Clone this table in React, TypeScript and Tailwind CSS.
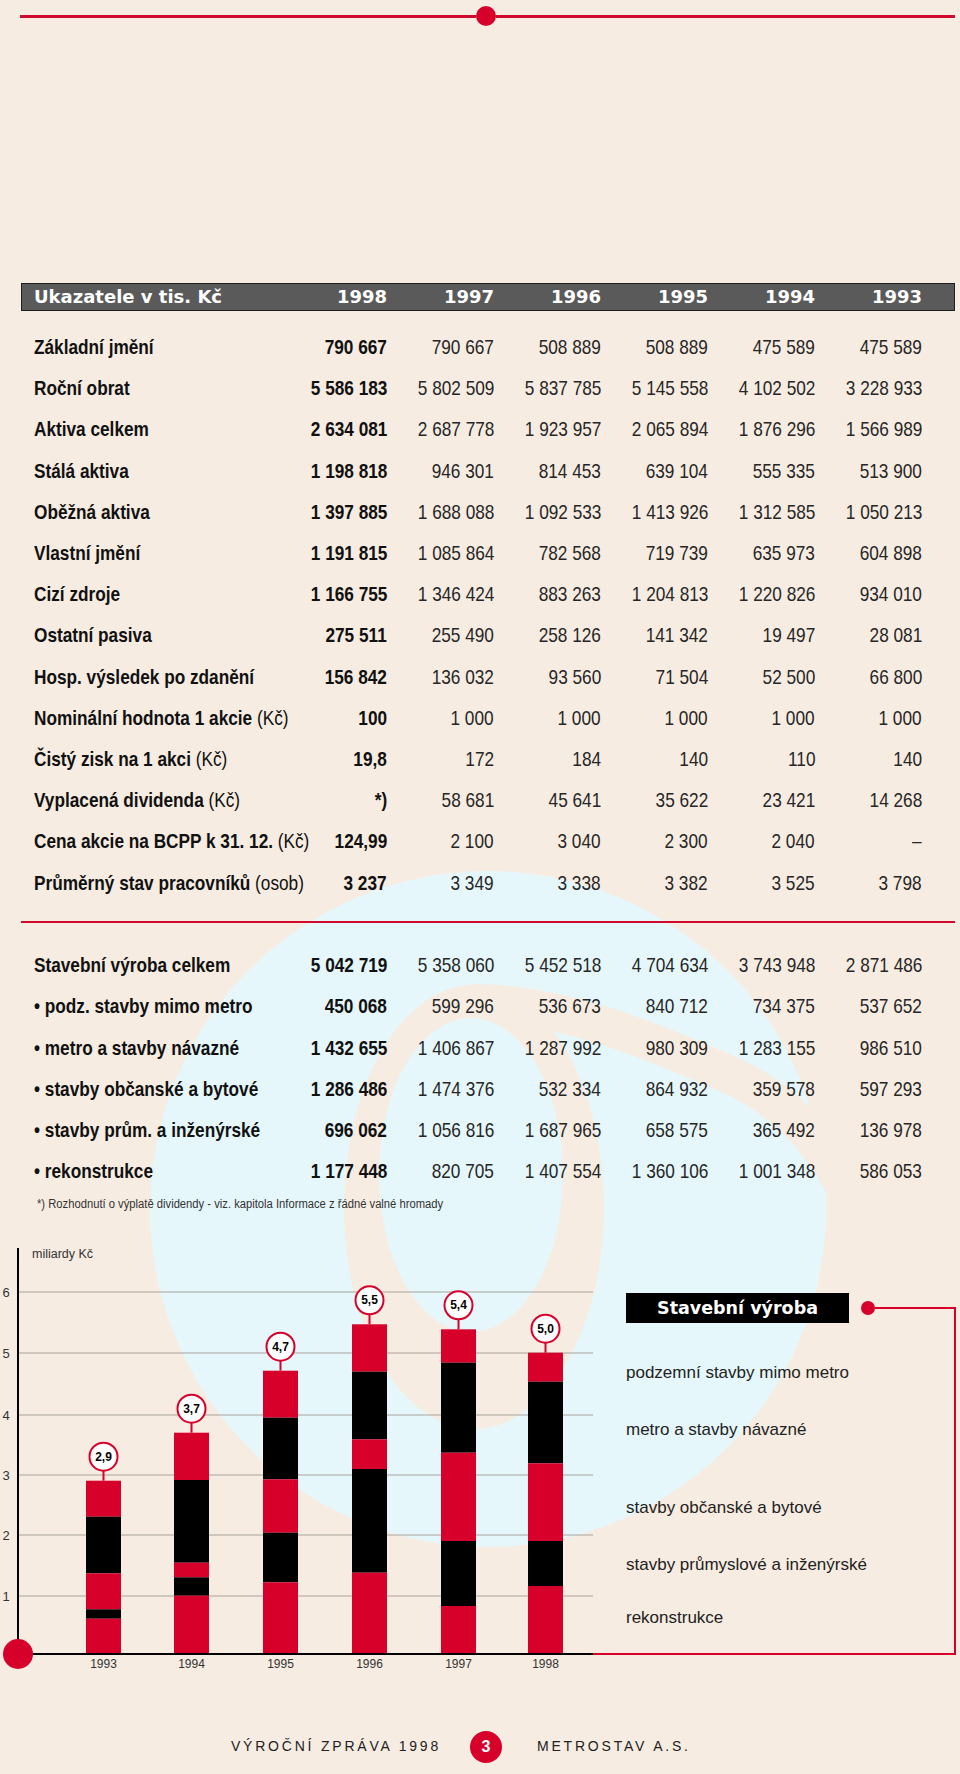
import clsx from 'clsx';

type Row = { label: string; unit?: string; values: string[] };

const YEARS = ['1998', '1997', '1996', '1995', '1994', '1993'];

const MAIN_ROWS: Row[] = [
  { label: 'Základní jmění', values: ['790 667', '790 667', '508 889', '508 889', '475 589', '475 589'] },
  { label: 'Roční obrat', values: ['5 586 183', '5 802 509', '5 837 785', '5 145 558', '4 102 502', '3 228 933'] },
  { label: 'Aktiva celkem', values: ['2 634 081', '2 687 778', '1 923 957', '2 065 894', '1 876 296', '1 566 989'] },
  { label: 'Stálá aktiva', values: ['1 198 818', '946 301', '814 453', '639 104', '555 335', '513 900'] },
  { label: 'Oběžná aktiva', values: ['1 397 885', '1 688 088', '1 092 533', '1 413 926', '1 312 585', '1 050 213'] },
  { label: 'Vlastní jmění', values: ['1 191 815', '1 085 864', '782 568', '719 739', '635 973', '604 898'] },
  { label: 'Cizí zdroje', values: ['1 166 755', '1 346 424', '883 263', '1 204 813', '1 220 826', '934 010'] },
  { label: 'Ostatní pasiva', values: ['275 511', '255 490', '258 126', '141 342', '19 497', '28 081'] },
  { label: 'Hosp. výsledek po zdanění', values: ['156 842', '136 032', '93 560', '71 504', '52 500', '66 800'] },
  { label: 'Nominální hodnota 1 akcie', unit: '(Kč)', values: ['100', '1 000', '1 000', '1 000', '1 000', '1 000'] },
  { label: 'Čistý zisk na 1 akci', unit: '(Kč)', values: ['19,8', '172', '184', '140', '110', '140'] },
  { label: 'Vyplacená dividenda', unit: '(Kč)', values: ['*)', '58 681', '45 641', '35 622', '23 421', '14 268'] },
  { label: 'Cena akcie na BCPP k 31. 12.', unit: '(Kč)', values: ['124,99', '2 100', '3 040', '2 300', '2 040', '–'] },
  { label: 'Průměrný stav pracovníků', unit: '(osob)', values: ['3 237', '3 349', '3 338', '3 382', '3 525', '3 798'] },
];

const BUILD_ROWS: Row[] = [
  { label: 'Stavební výroba celkem', values: ['5 042 719', '5 358 060', '5 452 518', '4 704 634', '3 743 948', '2 871 486'] },
  { label: '• podz. stavby mimo metro', values: ['450 068', '599 296', '536 673', '840 712', '734 375', '537 652'] },
  { label: '• metro a stavby návazné', values: ['1 432 655', '1 406 867', '1 287 992', '980 309', '1 283 155', '986 510'] },
  { label: '• stavby občanské a bytové', values: ['1 286 486', '1 474 376', '532 334', '864 932', '359 578', '597 293'] },
  { label: '• stavby prům. a inženýrské', values: ['696 062', '1 056 816', '1 687 965', '658 575', '365 492', '136 978'] },
  { label: '• rekonstrukce', values: ['1 177 448', '820 705', '1 407 554', '1 360 106', '1 001 348', '586 053'] },
];

// segment boundaries (chart px, top -> down), read off the printed chart
const BARS = [
  { year: '1993', value: '2,9', x: 86, stops: [240.7, 276.7, 333.3, 369.3, 378.7] },
  { year: '1994', value: '3,7', x: 174, stops: [192.7, 240, 322.7, 337.3, 355.7] },
  { year: '1995', value: '4,7', x: 263, stops: [130.7, 177.7, 239.3, 292.7, 342.3] },
  { year: '1996', value: '5,5', x: 352, stops: [84.3, 131.7, 199.3, 229, 332.7] },
  { year: '1997', value: '5,4', x: 441, stops: [89.3, 122.7, 212.7, 301, 366] },
  { year: '1998', value: '5,0', x: 528, stops: [112.7, 141.7, 223.3, 301, 346] },
];

const BASE = 414;
const GRID = [
  { v: 1, y: 356 },
  { v: 2, y: 295 },
  { v: 3, y: 235 },
  { v: 4, y: 175 },
  { v: 5, y: 113 },
  { v: 6, y: 52 },
];

const LEGEND = [
  { text: 'podzemní stavby mimo metro', mt: 'mt-[55px]' },
  { text: 'metro a stavby návazné', mt: 'mt-[37px]' },
  { text: 'stavby občanské a bytové', mt: 'mt-[58px]' },
  { text: 'stavby průmyslové a inženýrské', mt: 'mt-[37px]' },
  { text: 'rekonstrukce', mt: 'mt-[33px]' },
];

// no condensed face is installed, so the table type is narrowed horizontally
function NumRow({ row }: { row: Row }) {
  return (
    <div className="grid h-[41.2px] grid-cols-[minmax(0,1fr)_repeat(6,107px)] items-center leading-none">
      <div className="whitespace-nowrap font-bold text-[#111]">
        <span className="inline-block origin-left scale-x-[0.82]">
          {row.label}
          {row.unit && <span className="font-normal"> {row.unit}</span>}
        </span>
      </div>
      {row.values.map((v, i) => (
        <div
          key={i}
          className={clsx('whitespace-nowrap text-right', i === 0 ? 'font-bold text-[#111]' : 'font-normal text-[#262626]')}
        >
          <span className="inline-block origin-right scale-x-[0.82]">{v}</span>
        </div>
      ))}
    </div>
  );
}

function Chart() {
  return (
    <svg width={593} height={440} viewBox="0 0 593 440" className="block shrink-0" fontFamily="'Liberation Sans', Arial, sans-serif">
      {GRID.map((g) => (
        <g key={g.v}>
          <line x1={18} x2={593} y1={g.y} y2={g.y} stroke="#a8a39c" strokeWidth={1} />
          <text x={6} y={g.y} fontSize={13} fill="#333" textAnchor="middle" dominantBaseline="central">
            {g.v}
          </text>
        </g>
      ))}
      <text x={32} y={14} fontSize={12.5} fill="#333" dominantBaseline="central">
        miliardy Kč
      </text>
      {BARS.map((b) => {
        const edges = [...b.stops, BASE];
        const cx = b.x + 17.5;
        const top = b.stops[0];
        return (
          <g key={b.year}>
            {edges.slice(0, -1).map((y, i) => (
              <rect key={i} x={b.x} y={y} width={35} height={edges[i + 1] - y} fill={i % 2 === 0 ? '#d6002a' : '#000'} />
            ))}
            <line x1={cx} x2={cx} y1={top - 10} y2={top} stroke="#d6002a" strokeWidth={2} />
            <circle cx={cx} cy={top - 24} r={14} fill="#fff" stroke="#d6002a" strokeWidth={2} />
            <text x={cx} y={top - 24} fontSize={12} fontWeight={700} fill="#000" textAnchor="middle" dominantBaseline="central">
              {b.value}
            </text>
            <text x={cx} y={424} fontSize={12} fill="#333" textAnchor="middle" dominantBaseline="central">
              {b.year}
            </text>
          </g>
        );
      })}
      <line x1={18} x2={18} y1={8} y2={BASE} stroke="#000" strokeWidth={2} />
      <line x1={18} x2={593} y1={BASE} y2={BASE} stroke="#000" strokeWidth={2} />
      <circle cx={18} cy={BASE} r={15} fill="#d6002a" />
    </svg>
  );
}

// faint blue disc with a cream swirl running through it, behind the lower half
function Backdrop() {
  return (
    <svg className="pointer-events-none absolute left-0 top-0" width={960} height={1774}>
      <circle cx={488} cy={1209} r={338} fill="#e5f7fb" />
      <ellipse cx={474} cy={1207} rx={130} ry={222} fill="#f7ece1" />
      <path
        d="M 470 1003 C 560 1002 650 1040 730 1075 C 800 1107 850 1170 870 1260"
        fill="none"
        stroke="#f7ece1"
        strokeWidth={38}
      />
      <ellipse cx={471} cy={1175} rx={92} ry={157} fill="#e5f7fb" />
    </svg>
  );
}

export default function App() {
  return (
    <div className="relative min-h-[1774px] w-[960px] overflow-hidden bg-[#f7ece1] font-['Liberation_Sans',Arial,sans-serif]">
      <Backdrop />

      <div className="relative">
        {/* top rule */}
        <div className="ml-[20px] mr-[5px] mt-[6px] flex h-[20px] items-center">
          <div className="h-[3px] w-[456px] bg-[#cf0a2c]" />
          <div className="h-[20px] w-[20px] rounded-full bg-[#d6002a]" />
          <div className="h-[3px] flex-1 bg-[#cf0a2c]" />
        </div>

        {/* table header */}
        <div className="ml-[21px] mr-[5px] mt-[257px] grid h-[28px] grid-cols-[minmax(0,1fr)_repeat(6,107px)] items-center border border-[#1e1e1e] bg-[#5a5a5a] pl-[12px] pr-[32px] font-['DejaVu_Sans',sans-serif] text-[18px] font-bold leading-none text-white">
          <div className="whitespace-nowrap">Ukazatele v tis. Kč</div>
          {YEARS.map((y) => (
            <div key={y} className="text-right">
              {y}
            </div>
          ))}
        </div>

        <div className="mt-[15px] pl-[34px] pr-[38px] text-[21px]">
          {MAIN_ROWS.map((r) => (
            <NumRow key={r.label} row={r} />
          ))}
        </div>

        <div className="ml-[21px] mr-[5px] mt-[18.2px] h-[2px] bg-[#cf0a2c]" />

        <div className="mt-[21.4px] pl-[34px] pr-[38px] text-[21px]">
          {BUILD_ROWS.map((r) => (
            <NumRow key={r.label} row={r} />
          ))}
        </div>

        <p className="mt-[4.4px] whitespace-nowrap pl-[37px] text-[13.7px] leading-[16px] text-[#333]">
          <span className="inline-block origin-left scale-x-[0.82]">
            *) Rozhodnutí o výplatě dividendy - viz. kapitola Informace z řádné valné hromady
          </span>
        </p>

        {/* chart + legend */}
        <div className="mt-[28px] flex h-[440px]">
          <Chart />
          <div className="flex w-[363px] flex-col pt-[53px]">
            <div className="flex h-[30px] items-center pl-[33px]">
              <div className="flex h-[30px] w-[223px] items-center justify-center bg-black font-['DejaVu_Sans',sans-serif] text-[17.5px] font-bold text-white">
                Stavební výroba
              </div>
              <div className="ml-[12px] h-[14px] w-[14px] rounded-full bg-[#d6002a]" />
              <div className="h-[2px] flex-1 bg-[#d6002a]" />
            </div>
            <div className="-mt-[15px] flex h-[347px] flex-col border-b-2 border-r-2 border-[#d6002a] pl-[33px] text-[17px] leading-[20px] text-[#222]">
              {LEGEND.map((l) => (
                <div key={l.text} className={l.mt}>
                  {l.text}
                </div>
              ))}
            </div>
          </div>
        </div>

        {/* footer */}
        <div className="mt-[51px] flex h-[32px] items-center text-[14px] tracking-[2.8px] text-[#222]">
          <div className="w-[470px] pr-[29px] text-right">VÝROČNÍ ZPRÁVA 1998</div>
          <div className="flex h-[32px] w-[32px] items-center justify-center rounded-full bg-[#d6002a] text-[16px] font-bold tracking-normal text-white">
            3
          </div>
          <div className="pl-[35px]">METROSTAV A.S.</div>
        </div>
      </div>
    </div>
  );
}
